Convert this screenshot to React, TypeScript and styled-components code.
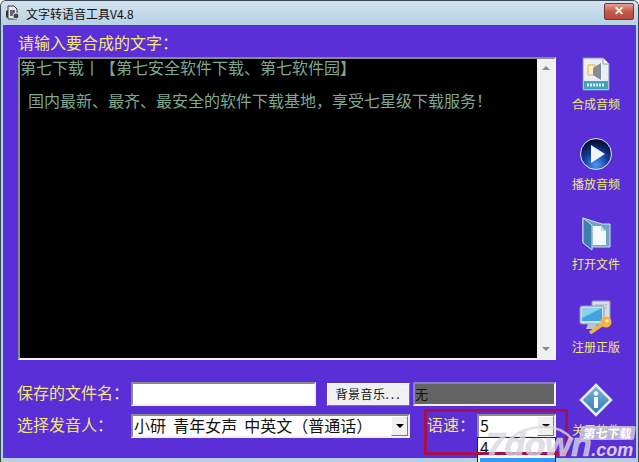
import * as React from 'react'
import styled, { createGlobalStyle } from 'styled-components'

const cjk = '"Noto Sans CJK SC", "Liberation Sans", sans-serif'

// full-width punctuation, as the original window draws it
const colon = '\uFF1A'
const headline = '第七下载丨【第七安全软件下载、第七软件园】'
const slogan = '国内最新、最齐、最安全的软件下载基地\uFF0C享受七星级下载服务\uFF01'
const voice = '小研  青年女声  中英文\uFF08普通话\uFF09'

const Global = createGlobalStyle`
  html, body {
    margin: 0;
    padding: 0;
    background: #fff;
    overflow: hidden;
  }
`

const Window = styled.div`
  position: relative;
  width: 639px;
  height: 462px;
  box-sizing: border-box;
  display: flex;
  flex-flow: column;
  overflow: hidden;
  border: 1px solid #3a4a58;
  border-bottom: none;
  border-radius: 6px 6px 0 0;
  background: #b5d0e4;
  font-family: ${cjk};
`

const TitleBar = styled.div`
  height: 24px;
  flex: none;
  display: flex;
  align-items: center;
  padding: 0 4px 0 4px;
  background: linear-gradient(#d3e2ee, #b6d1e5);
`

const Title = styled.span`
  font-size: 12px;
  color: #111;
  margin-left: 5px;
  flex: 1;
`

const CloseButton = styled.div`
  width: 30px;
  height: 17px;
  box-sizing: border-box;
  margin-top: -3px;
  border: 1px solid #6b3a38;
  border-radius: 2px;
  background: linear-gradient(#e6a08e, #c65a4c 50%, #b8473a);
  color: #fff;
  font: bold 12px/15px "Liberation Sans", sans-serif;
  text-align: center;
`

const Client = styled.div`
  flex: 1;
  margin: 0 2px 4px 2px;
  padding: 8px 0 0 14px;
  background: #5a2fd8;
  display: flex;
  min-height: 0;
`

const Main = styled.div`
  width: 539px;
  flex: none;
  display: flex;
  flex-flow: column;
`

const Label = styled.div<{ $width?: number }>`
  color: #f4e878;
  font-size: 16px;
  line-height: 20px;
  flex: none;
  width: ${(p) => (p.$width ? `${p.$width}px` : 'auto')};
`

const Prompt = styled(Label)`
  margin-left: 1px;
  margin-top: -1px;
  margin-bottom: 5px;
`

const RowLabel = styled(Label)`
  margin-top: -4px;
`

const Editor = styled.div`
  height: 303px;
  flex: none;
  margin-left: 1px;
  box-sizing: border-box;
  display: flex;
  background: #000;
  border-top: 2px solid #8a8a8a;
  border-left: 2px solid #8a8a8a;
  border-right: 2px solid #f4f4f4;
  border-bottom: 2px solid #f4f4f4;
`

const EditorText = styled.div`
  flex: 1;
  color: #7fa890;
  font-size: 16px;
  line-height: 16px;
  white-space: pre;
`

const Slogan = styled.div`
  margin: 17px 0 0 8px;
`

const ScrollBar = styled.div`
  width: 17px;
  flex: none;
  background: #f0f0f0;
  display: flex;
  flex-flow: column;
  align-items: center;
  justify-content: space-between;
  padding: 7px 0;
  box-sizing: border-box;
`

const Arrow = styled.div<{ $down?: boolean }>`
  width: 0;
  height: 0;
  border-left: 4px solid transparent;
  border-right: 4px solid transparent;
  ${(p) => (p.$down ? 'border-top: 4px solid #8a8a8a;' : 'border-bottom: 4px solid #8a8a8a;')}
`

const FormRow = styled.div<{ $top: number }>`
  display: flex;
  align-items: center;
  height: 24px;
  flex: none;
  margin-top: ${(p) => p.$top}px;
`

const FileInput = styled.div`
  width: 185px;
  height: 24px;
  box-sizing: border-box;
  background: #fff;
  border: 2px solid;
  border-color: #8a8a8a #f0f0f0 #f0f0f0 #8a8a8a;
`

const MusicButton = styled.div`
  width: 83px;
  height: 23px;
  margin-left: 11px;
  box-sizing: border-box;
  background: #f0f0f0;
  border: 1px solid;
  border-color: #fff #777 #777 #fff;
  color: #111;
  font-size: 12px;
  line-height: 20px;
  text-align: center;
  letter-spacing: 0.5px;
`

const Dots = styled.span`
  letter-spacing: 2px;
`

const MusicField = styled.div`
  width: 143px;
  height: 24px;
  margin-left: 3px;
  box-sizing: border-box;
  background: #646464;
  border: 2px solid;
  border-color: #8a7ec8 #f0f0f0 #f0f0f0 #8a7ec8;
  color: #111;
  font-size: 13px;
  line-height: 20px;
`

const Combo = styled.div<{ $width: number }>`
  width: ${(p) => p.$width}px;
  height: 24px;
  box-sizing: border-box;
  background: #fff;
  border: 2px solid;
  border-color: #8a8a8a #f0f0f0 #f0f0f0 #8a8a8a;
  display: flex;
  color: #111;
  font-size: 16px;
  line-height: 18px;
  padding-left: 1px;
`

const ComboText = styled.span`
  flex: 1;
  white-space: pre;
`

const ComboButton = styled.div`
  width: 17px;
  flex: none;
  box-sizing: border-box;
  background: #f0f0f0;
  border: 1px solid;
  border-color: #fff #777 #777 #fff;
  display: flex;
  align-items: center;
  justify-content: center;
`

const BlackArrow = styled.div`
  width: 0;
  height: 0;
  border-left: 4px solid transparent;
  border-right: 4px solid transparent;
  border-top: 4px solid #000;
`

const SpeedLabel = styled(RowLabel)`
  margin-left: 17px;
  width: 50px;
`

const DropList = styled.div`
  position: absolute;
  left: 476px;
  top: 436px;
  width: 79px;
  height: 26px;
  background: #fff;
  border: 1px solid #222;
  border-bottom: none;
  box-sizing: border-box;
  font-size: 16px;
  line-height: 19px;
  padding-left: 2px;
  color: #111;
`

const DropHighlight = styled.div`
  position: absolute;
  left: 2px;
  right: 0;
  top: 20px;
  height: 6px;
  background: #3399ff;
`

const HighlightBox = styled.div`
  position: absolute;
  left: 423px;
  top: 408px;
  width: 144px;
  height: 46px;
  box-sizing: border-box;
  border: 3px solid #a8104c;
`

const SideBar = styled.div`
  flex: 1;
  display: flex;
  flex-flow: column;
  align-items: center;
  padding-top: 24px;
`

const SideButton = styled.div<{ $height: number }>`
  display: flex;
  flex-flow: column;
  align-items: center;
  height: ${(p) => p.$height}px;
  flex: none;
`

const SideIcon = styled.svg`
  width: 34px;
  height: 34px;
  flex: none;
`

const SideLabel = styled.div`
  color: #f4e878;
  font-size: 12px;
  line-height: 16px;
  margin-top: 5px;
  white-space: nowrap;
`

const Swoosh = styled.svg`
  position: absolute;
  left: 505px;
  top: 418px;
  width: 75px;
  height: 30px;
`

const Watermark = styled.div`
  position: absolute;
  left: 485px;
  top: 426px;
  height: 34px;
  font: italic bold 34px/34px "Liberation Sans", sans-serif;
  letter-spacing: -0.5px;
  white-space: nowrap;
  color: rgba(215, 215, 225, 0.8);
  -webkit-text-stroke: 0.6px rgba(215, 215, 225, 0.8);
`

const WatermarkSuffix = styled.span`
  font-size: 18px;
  letter-spacing: 0;
  -webkit-text-stroke: 0;
  color: rgba(235, 235, 240, 0.85);
`

const WatermarkBadge = styled.div`
  position: absolute;
  left: 579px;
  top: 425px;
  width: 55px;
  height: 14px;
  background: rgba(205, 205, 210, 0.85);
  border-radius: 2px;
  transform: skewX(-8deg);
  color: #fff;
  font-size: 12px;
  font-weight: 700;
  line-height: 14px;
  text-align: center;
  white-space: nowrap;
`

const AppIcon = () => (
  <svg width="16" height="16" viewBox="0 0 16 16">
    <path d="M3 1h6l3 3v10H3z" fill="#e8e8f0" stroke="#333" />
    <path d="M5 5h5v6H5z" fill="#667" />
    <circle cx="11" cy="11" r="3" fill="#445" stroke="#ddd" />
    <path d="M1 6l2-1v8l-2-1z" fill="#333" />
  </svg>
)

const App = () => (
  <Window>
    <Global />
    <TitleBar>
      <AppIcon />
      <Title>文字转语音工具V4.8</Title>
      <CloseButton>✕</CloseButton>
    </TitleBar>
    <Client>
      <Main>
        <Prompt>请输入要合成的文字{colon}</Prompt>
        <Editor>
          <EditorText>
            {headline}
            <Slogan>{slogan}</Slogan>
          </EditorText>
          <ScrollBar>
            <Arrow />
            <Arrow $down />
          </ScrollBar>
        </Editor>
        <FormRow $top={22}>
          <RowLabel $width={114}>保存的文件名{colon}</RowLabel>
          <FileInput />
          <MusicButton>背景音乐<Dots>...</Dots></MusicButton>
          <MusicField>无</MusicField>
        </FormRow>
        <FormRow $top={8}>
          <RowLabel $width={114}>选择发音人{colon}</RowLabel>
          <Combo $width={279}>
            <ComboText>{voice}</ComboText>
            <ComboButton><BlackArrow /></ComboButton>
          </Combo>
          <SpeedLabel>语速{colon}</SpeedLabel>
          <Combo $width={79}>
            <ComboText>5</ComboText>
            <ComboButton><BlackArrow /></ComboButton>
          </Combo>
        </FormRow>
      </Main>
      <SideBar>
        <SideButton $height={80}>
          <SideIcon viewBox="0 0 34 34">
            <path d="M4 1h20l6 6v26H4z" fill="#e9eef8" stroke="#7c8fd0" />
            <path d="M24 1v6h6" fill="#fff" stroke="#99a" />
            <rect x="5" y="24" width="24" height="8" fill="#3fa5bf" />
            <path d="M9 8h7v10H9z" fill="#fbf0d0" stroke="#e8a83c" />
            <path d="M14 11l8-5v17l-8-5z" fill="#878d95" />
            <path d="M8 28h18" stroke="#d8f0f8" strokeWidth="3" strokeDasharray="2 1" />
          </SideIcon>
          <SideLabel>合成音频</SideLabel>
        </SideButton>
        <SideButton $height={80}>
          <SideIcon viewBox="0 0 34 34">
            <defs>
              <radialGradient id="ball" cx="50%" cy="85%" r="75%">
                <stop offset="0" stopColor="#4a98f4" />
                <stop offset="0.55" stopColor="#123c9c" />
                <stop offset="1" stopColor="#06123e" />
              </radialGradient>
            </defs>
            <circle cx="17" cy="17" r="15.5" fill="url(#ball)" stroke="#e8e8f4" strokeWidth="1" />
            <path d="M12 8l14 9-14 9z" fill="#eef4fc" />
          </SideIcon>
          <SideLabel>播放音频</SideLabel>
        </SideButton>
        <SideButton $height={83}>
          <SideIcon viewBox="0 0 34 34">
            <path d="M4 1l19 6h8v23H12l-8-5z" fill="#6aa6c6" stroke="#cfe0ee" />
            <path d="M4 1l9 7v25l-9-7z" fill="#3d7fa8" stroke="#cfe0ee" />
            <path d="M14 9h8l5 5v14H14z" fill="#f6f8fd" />
            <path d="M22 9v5h5" fill="#c6d4e4" />
          </SideIcon>
          <SideLabel>打开文件</SideLabel>
        </SideButton>
        <SideButton $height={83}>
          <SideIcon viewBox="0 0 34 34">
            <rect x="13" y="1" width="18" height="24" rx="1" fill="#d5dce4" stroke="#8a9cb0" />
            <path d="M16 5h12M16 8h12" stroke="#9fb0c0" />
            <rect x="1" y="6" width="24" height="18" rx="2" fill="#cfdbe6" stroke="#8a9cb0" />
            <rect x="3" y="8" width="20" height="13" fill="#3fa4dc" />
            <path d="M3 8h20L3 18z" fill="#8cd0ee" />
            <path d="M9 24h8l2 5H7z" fill="#b7c4d0" />
            <path d="M11 33l13-9" stroke="#f2b440" strokeWidth="3.5" />
            <circle cx="27" cy="22" r="5.5" fill="#f2b440" />
            <circle cx="28" cy="21" r="1.8" fill="#fbe6a8" />
          </SideIcon>
          <SideLabel>注册正版</SideLabel>
        </SideButton>
        <SideButton $height={60}>
          <SideIcon viewBox="0 0 34 34">
            <defs>
              <linearGradient id="gem" x1="0" y1="0" x2="0" y2="1">
                <stop offset="0" stopColor="#7fb8dc" />
                <stop offset="1" stopColor="#2a78b0" />
              </linearGradient>
            </defs>
            <path d="M17 2l15 15-15 15L2 17z" fill="url(#gem)" stroke="#e4eef8" strokeWidth="2.5" />
            <circle cx="17" cy="10.5" r="2.2" fill="#fff" />
            <rect x="15" y="14" width="4" height="11" fill="#fff" />
          </SideIcon>
          <SideLabel>关于软件</SideLabel>
        </SideButton>
      </SideBar>
    </Client>
    <DropList>
      4
      <DropHighlight />
    </DropList>
    <HighlightBox />
    <Swoosh viewBox="0 0 75 30">
      <path d="M4 20C18 8 48 0 66 20" fill="none" stroke="rgba(215,215,225,0.8)" strokeWidth="2.5" />
    </Swoosh>
    <Watermark>7down<WatermarkSuffix>.com</WatermarkSuffix></Watermark>
    <WatermarkBadge>第七下载</WatermarkBadge>
  </Window>
)

export default App
